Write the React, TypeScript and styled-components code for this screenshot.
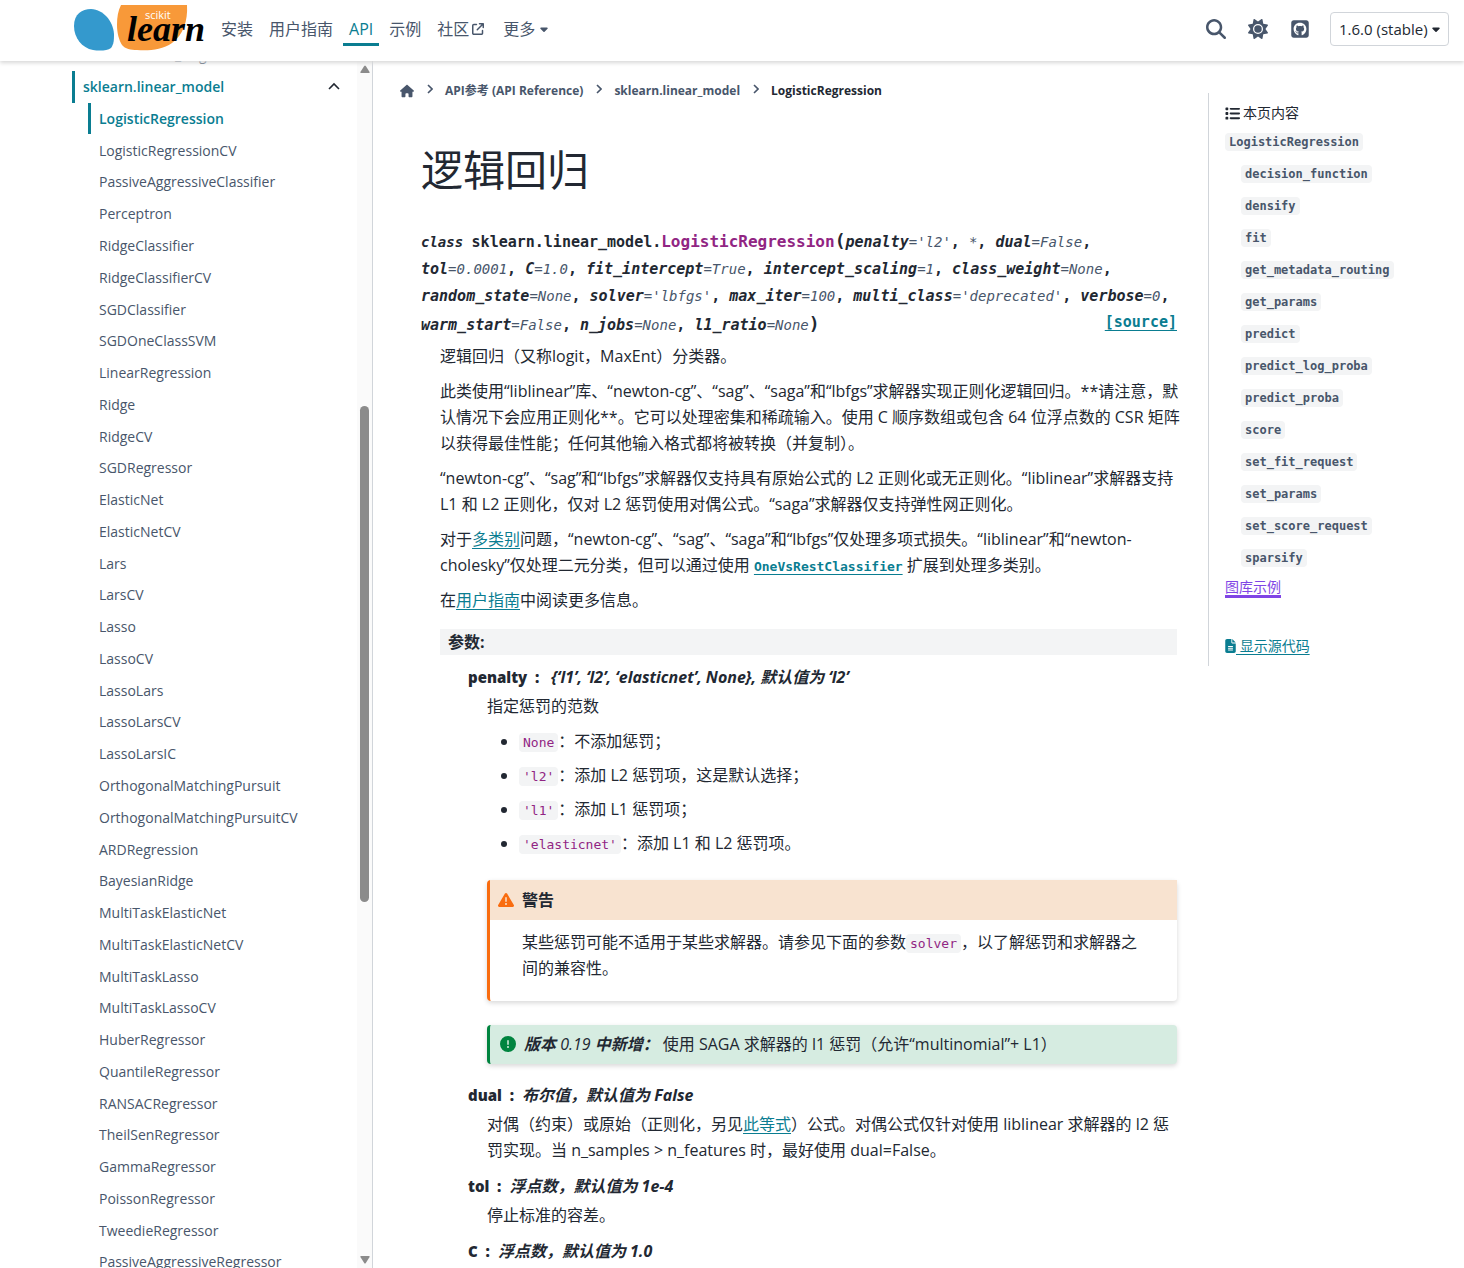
import React from "react";
import styled, { createGlobalStyle, css } from "styled-components";
import {
  FaArrowUpRightFromSquare,
  FaCaretDown,
  FaCircleExclamation,
  FaFileLines,
  FaHouse,
  FaList,
  FaMagnifyingGlass,
  FaSquareGithub,
  FaSun,
  FaTriangleExclamation,
} from "react-icons/fa6";

const color = {
  text: "#222832",
  muted: "#48566b",
  primary: "#0a7d91",
  visited: "#8045e5",
  code: "#912583",
  surface: "#f3f4f5",
  border: "#d1d5da",
  warning: "#f96c0f",
  warningBg: "#f8e3d0",
  success: "#00843f",
  successBg: "#d6ece1",
};

const sans = `"Open Sans", "Noto Sans CJK SC", sans-serif`;
const mono = `"DejaVu Sans Mono", "Noto Sans CJK SC", monospace`;

const GlobalStyle = createGlobalStyle`
  *, *::before, *::after { box-sizing: border-box; }
  body {
    margin: 0;
    background: #fff;
    color: ${color.text};
    font: 16px/26px ${sans};
  }
  ul, ol, dl, dd, p, h1 { margin: 0; padding: 0; }
  ul, ol { list-style: none; }
  button { font: inherit; color: inherit; background: none; border: 0; padding: 0; cursor: pointer; }
  a { color: ${color.primary}; text-underline-offset: 3px; }
`;

/* ---------- header ---------- */

const Header = styled.header`
  position: sticky;
  top: 0;
  z-index: 2;
  display: flex;
  align-items: center;
  height: 61px;
  padding: 0 15px 3px 72px;
  background: #fff;
  box-shadow: 0 2px 4px 0 #d8d8d8;
`;

const LogoLink = styled.a`
  display: flex;
  margin-right: 10px;
`;

const MainNav = styled.ul`
  display: flex;
  gap: 4px;
  flex: 1;
`;

const navEntry = css<{ $active?: boolean }>`
  display: flex;
  align-items: center;
  gap: 3px;
  height: 34px;
  padding: 3px 6px 0;
  color: ${(p) => (p.$active ? color.primary : color.muted)};
  border-bottom: 3px solid ${(p) => (p.$active ? color.primary : "transparent")};
  text-decoration: none;
`;

const NavLink = styled.a<{ $active?: boolean }>`
  ${navEntry}
`;

const NavButton = styled.button<{ $active?: boolean }>`
  && {
    ${navEntry}
    margin-left: 3px;
  }
`;

const Tools = styled.div`
  display: flex;
  align-items: center;
  gap: 20px;
`;

const IconGroup = styled.div`
  display: flex;
  align-items: center;
  gap: 22px;
  color: ${color.muted};
  font-size: 20px;
`;

const IconButton = styled.button`
  display: flex;
`;

const GithubLink = styled.a`
  display: flex;
  color: ${color.muted};
`;

const VersionPicker = styled.label`
  position: relative;
  color: ${color.text};
  font-size: 12px;
  svg {
    position: absolute;
    right: 7px;
    top: 11px;
    pointer-events: none;
  }
`;

const VersionSelect = styled.select`
  appearance: none;
  display: block;
  width: 119px;
  height: 34px;
  padding: 0 8px;
  border: 1px solid ${color.border};
  border-radius: 4px;
  background: #fff;
  color: ${color.text};
  font: 15px/24px ${sans};
`;

const Logo = () => (
  <svg width="133" height="50" viewBox="72 4 133 50" role="img" aria-label="scikit-learn">
    <path
      d="M74 26C74 14 82 9 91 9c13 1 22 12 23 25 0 5 0 10-3 14-4 3-12 3-18 2C82 48 74 38 74 26Z"
      fill="#3499cd"
    />
    <path
      d="M121 5h66c1 16-4 30-15 38-10 7-24 8-35 7-6 0-12-1-15-5-3-5-5-12-5-20 0-8 1-14 4-20Z"
      fill="#f89939"
    />
    <text x="145" y="19" fontSize="11" fill="#fff" fontFamily={`"Open Sans", sans-serif`}>
      scikit
    </text>
    <text
      x="127"
      y="41"
      fontSize="36"
      fontWeight="700"
      fontStyle="italic"
      fill="#010101"
      fontFamily={`"Liberation Serif", serif`}
    >
      learn
    </text>
  </svg>
);

/* ---------- page frame ---------- */

const Page = styled.div`
  display: grid;
  grid-template-columns: 373px minmax(0, 1fr) 256px;
  align-items: start;
`;

const Sidebar = styled.aside`
  position: sticky;
  top: 61px;
  display: flex;
  height: calc(100vh - 61px);
  padding-left: 72px;
  border-right: 1px solid ${color.border};
  overflow: hidden;
`;

const SideNav = styled.nav`
  flex: 1;
`;

const SideList = styled.ul`
  display: flex;
  flex-direction: column;
  min-height: calc(100% + 32px);
  margin-top: -22px;
`;

const SideItem = styled.li<{ $nested?: boolean }>`
  display: flex;
  flex: 1 0 auto;
  align-items: stretch;
  padding-left: ${(p) => (p.$nested ? 16 : 0)}px;
`;

const SideLink = styled.a<{ $active?: boolean }>`
  display: flex;
  align-items: center;
  flex: 1;
  padding: 4px 8px 3px 8px;
  border-left: 3px solid ${(p) => (p.$active ? color.primary : "transparent")};
  color: ${(p) => (p.$active ? color.primary : color.muted)};
  font-size: 14px;
  font-weight: ${(p) => (p.$active ? 600 : 400)};
  line-height: 24px;
  text-decoration: none;
`;

const Toggle = styled.button`
  display: flex;
  align-items: center;
  margin-right: 17px;
`;

const ScrollBar = styled.div`
  display: flex;
  flex-direction: column;
  align-items: center;
  width: 15px;
  padding: 4px 0;
  background: #fafafa;
`;

const ScrollTrack = styled.div`
  flex: 1;
  display: grid;
  grid-template-rows: 332fr 495fr 353fr;
`;

const ScrollThumb = styled.div`
  grid-row: 2;
  width: 9px;
  border-radius: 5px;
  background: #8b8b8b;
`;

/* ---------- article ---------- */

const Main = styled.main`
  padding: 17px 31px 0 27px;
`;

const Crumbs = styled.ol`
  display: flex;
  align-items: center;
  font-size: 12px;
  font-weight: 700;
`;

const Crumb = styled.li`
  display: flex;
  align-items: center;
  color: ${color.text};
  & + & > svg { margin: 0 12px 0 13px; color: ${color.muted}; }
  a { display: flex; color: ${color.muted}; text-decoration: none; font-size: 12px; }
`;

const HomeLink = styled.a`
  && { font-size: 14px; }
`;

const Article = styled.article`
  padding: 37px 0 0 21px;
`;

const Title = styled.h1`
  font-size: 42px;
  font-weight: 400;
  line-height: 58px;
`;

const Signature = styled.div`
  margin-top: 28px;
  font: 700 15px/27px ${mono};
`;

const Keyword = styled.em`
  font-size: 14px;
`;

const ClassName = styled.span`
  color: ${color.code};
  font-size: 16px;
`;

const Paren = styled.span`
  font-size: 18px;
`;

const ArgValue = styled.span`
  color: ${color.muted};
  font-size: 14px;
  font-weight: 400;
  font-style: italic;
`;

const SourceLink = styled.a`
  float: right;
  line-height: 24px;
`;

const Body = styled.div`
  display: flex;
  flex-direction: column;
  gap: 9px;
  padding: 4px 0 0 19px;
`;

const Prose = styled.p`
  margin-right: -5px;
`;

const Code = styled.code`
  padding: 2px 4px;
  border-radius: 4px;
  background: ${color.surface};
  color: ${color.code};
  font: 13px/18px ${mono};
`;

const CodeLink = styled.a`
  font: 700 13px/18px ${mono};
`;

const FieldTitle = styled.div`
  margin-top: 7px;
  padding: 0 8px;
  background: ${color.surface};
  font-weight: 700;
`;

const Params = styled.dl`
  padding-left: 28px;
`;

const Term = styled.dt`
  margin-bottom: 3px;
  font-weight: 800;
  font-size: 15px;
`;

const TermType = styled.em<{ $wide?: boolean }>`
  margin-left: ${(p) => (p.$wide ? 12 : 8)}px;
  font-size: 16px;
  font-weight: 700;
`;

const Desc = styled.dd`
  margin: 0 0 10px 19px;
`;

const Options = styled.ul`
  display: flex;
  flex-direction: column;
  gap: 8px;
  margin: 9px 0 24px 32px;
  list-style: disc;
`;

const Admonition = styled.section`
  margin-bottom: 24px;
  border-left: 3px solid ${color.warning};
  border-radius: 4px;
  box-shadow: 0 2px 5px #d8d8d8;
`;

const AdmonitionTitle = styled.p`
  display: flex;
  align-items: center;
  gap: 8px;
  padding: 7px 8px;
  background: ${color.warningBg};
  font-weight: 700;
  svg { color: ${color.warning}; }
`;

const AdmonitionText = styled.p`
  padding: 9px 32px 20px;
`;

const VersionNote = styled.p`
  display: flex;
  align-items: center;
  margin-bottom: 18px;
  padding: 6px 10px 7px;
  border-left: 3px solid ${color.success};
  border-radius: 4px;
  background: ${color.successBg};
  box-shadow: 0 2px 5px #d8d8d8;
  svg { margin-right: 8px; color: ${color.success}; }
  em { margin-right: 4px; font-weight: 700; }
`;

const VersionNumber = styled.span`
  font-weight: 500;
`;

/* ---------- table of contents ---------- */

const Toc = styled.aside`
  margin-top: 32px;
  padding: 7px 0 7px 16px;
  border-left: 1px solid ${color.border};
  font-size: 14px;
`;

const TocTitle = styled.div`
  display: flex;
  align-items: center;
  gap: 3px;
`;

const TocItem = styled.li<{ $nested?: boolean }>`
  padding: 2px 0 4px ${(p) => (p.$nested ? 16 : 0)}px;
  line-height: 26px;
`;

const TocLink = styled.a`
  display: inline-block;
  padding: 0 4px;
  border-radius: 4px;
  background: ${color.surface};
  color: ${color.muted};
  font: 700 12px/18px ${mono};
  text-decoration: none;
`;

const VisitedLink = styled.a`
  color: ${color.visited};
  text-decoration-thickness: 3px;
`;

const ShowSource = styled.a`
  display: flex;
  align-items: center;
  margin-top: 33px;
  white-space: pre;
  svg { width: 11px; }
`;

const models = [
  "LogisticRegression", "LogisticRegressionCV", "PassiveAggressiveClassifier", "Perceptron",
  "RidgeClassifier", "RidgeClassifierCV", "SGDClassifier", "SGDOneClassSVM", "LinearRegression",
  "Ridge", "RidgeCV", "SGDRegressor", "ElasticNet", "ElasticNetCV", "Lars", "LarsCV", "Lasso",
  "LassoCV", "LassoLars", "LassoLarsCV", "LassoLarsIC", "OrthogonalMatchingPursuit",
  "OrthogonalMatchingPursuitCV", "ARDRegression", "BayesianRidge", "MultiTaskElasticNet",
  "MultiTaskElasticNetCV", "MultiTaskLasso", "MultiTaskLassoCV", "HuberRegressor",
  "QuantileRegressor", "RANSACRegressor", "TheilSenRegressor", "GammaRegressor",
  "PoissonRegressor", "TweedieRegressor", "PassiveAggressiveRegressor",
];

const methods = [
  "decision_function", "densify", "fit", "get_metadata_routing", "get_params", "predict",
  "predict_log_proba", "predict_proba", "score", "set_fit_request", "set_params",
  "set_score_request", "sparsify",
];

const args: [string, string?][] = [
  ["penalty", "'l2'"], ["*"], ["dual", "False"], ["tol", "0.0001"], ["C", "1.0"],
  ["fit_intercept", "True"], ["intercept_scaling", "1"], ["class_weight", "None"],
  ["random_state", "None"], ["solver", "'lbfgs'"], ["max_iter", "100"],
  ["multi_class", "'deprecated'"], ["verbose", "0"], ["warm_start", "False"],
  ["n_jobs", "None"], ["l1_ratio", "None"],
];

const ChevronUp = () => (
  <svg width="12" height="12" viewBox="0 0 12 12" fill="none" stroke={color.text} strokeWidth="1.6">
    <path d="M1 8l5-5 5 5" />
  </svg>
);

const Separator = () => (
  <svg width="6" height="14" viewBox="0 0 6 14" fill="none" stroke="currentColor" strokeWidth="1.6" aria-hidden="true">
    <path d="M1 1l4 4-4 4" />
  </svg>
);

const ScrollArrow = ({ down }: { down?: boolean }) => (
  <svg width="10" height="8" viewBox="0 0 10 8" fill="#8b8b8b" aria-hidden="true">
    <path d={down ? "M1 0h8q1 0 .6 1L5.8 7q-.8 1-1.6 0L.4 1Q0 0 1 0Z" : "M1 8h8q1 0 .6-1L5.8 1Q5 0 4.2 1L.4 7Q0 8 1 8Z"} />
  </svg>
);

export default function App() {
  return (
    <>
      <GlobalStyle />
      <Header>
        <LogoLink href="#"><Logo /></LogoLink>
        <MainNav>
          <li><NavLink href="#">安装</NavLink></li>
          <li><NavLink href="#">用户指南</NavLink></li>
          <li><NavLink href="#" $active>API</NavLink></li>
          <li><NavLink href="#">示例</NavLink></li>
          <li><NavLink href="#">社区<FaArrowUpRightFromSquare size={12} /></NavLink></li>
          <li><NavButton type="button">更多<FaCaretDown size={12} /></NavButton></li>
        </MainNav>
        <Tools>
          <IconGroup>
            <IconButton type="button" aria-label="搜索"><FaMagnifyingGlass /></IconButton>
            <IconButton type="button" aria-label="主题"><FaSun /></IconButton>
            <GithubLink href="#" aria-label="GitHub"><FaSquareGithub /></GithubLink>
          </IconGroup>
          <VersionPicker>
            <VersionSelect aria-label="版本"><option>1.6.0 (stable)</option></VersionSelect>
            <FaCaretDown />
          </VersionPicker>
        </Tools>
      </Header>
      <Page>
        <Sidebar>
          <SideNav>
            <SideList>
              <SideItem><SideLink href="#">sklearn.kernel_ridge</SideLink></SideItem>
              <SideItem>
                <SideLink href="#" $active>sklearn.linear_model</SideLink>
                <Toggle type="button" aria-label="折叠"><ChevronUp /></Toggle>
              </SideItem>
              {models.map((name, i) => (
                <SideItem key={name} $nested>
                  <SideLink href="#" $active={i === 0}>{name}</SideLink>
                </SideItem>
              ))}
            </SideList>
          </SideNav>
          <ScrollBar>
            <ScrollArrow />
            <ScrollTrack><ScrollThumb /></ScrollTrack>
            <ScrollArrow down />
          </ScrollBar>
        </Sidebar>

        <Main>
          <nav aria-label="Breadcrumb">
            <Crumbs>
              <Crumb><HomeLink href="#" aria-label="Home"><FaHouse /></HomeLink></Crumb>
              <Crumb><Separator /><a href="#">API参考 (API Reference)</a></Crumb>
              <Crumb><Separator /><a href="#">sklearn.linear_model</a></Crumb>
              <Crumb aria-current="page"><Separator />LogisticRegression</Crumb>
            </Crumbs>
          </nav>
          <Article>
            <Title>逻辑回归</Title>
            <Signature>
              <Keyword>class </Keyword>sklearn.linear_model.<ClassName>LogisticRegression</ClassName>
              <Paren>(</Paren>
              {args.map(([name, value], i) => (
                <React.Fragment key={name}>
                  {value ? <em>{name}</em> : <ArgValue>{name}</ArgValue>}
                  {value && <ArgValue>={value}</ArgValue>}
                  {i < args.length - 1 && ", "}
                </React.Fragment>
              ))}
              <Paren>)</Paren>
              <SourceLink href="#">[source]</SourceLink>
            </Signature>
            <Body>
              <Prose>逻辑回归（又称logit，MaxEnt）分类器。</Prose>
              <Prose>
                此类使用“liblinear”库、“newton-cg”、“sag”、“saga”和“lbfgs”求解器实现正则化逻辑回归。**请注意，默认情况下会应用正则化**。它可以处理密集和稀疏输入。使用 C 顺序数组或包含 64 位浮点数的 CSR 矩阵以获得最佳性能；任何其他输入格式都将被转换（并复制）。
              </Prose>
              <Prose>
                “newton-cg”、“sag”和“lbfgs”求解器仅支持具有原始公式的 L2 正则化或无正则化。“liblinear”求解器支持 L1 和 L2 正则化，仅对 L2 惩罚使用对偶公式。“saga”求解器仅支持弹性网正则化。
              </Prose>
              <Prose>
                对于<a href="#">多类别</a>问题，“newton-cg”、“sag”、“saga”和“lbfgs”仅处理多项式损失。“liblinear”和“newton-cholesky”仅处理二元分类，但可以通过使用 <CodeLink href="#">OneVsRestClassifier</CodeLink> 扩展到处理多类别。
              </Prose>
              <Prose>在<a href="#">用户指南</a>中阅读更多信息。</Prose>
              <FieldTitle>参数:</FieldTitle>
              <Params>
                <Term>penalty&nbsp; :<TermType $wide>{"{‘l1’, ‘l2’, ‘elasticnet’, None}, 默认值为 ‘l2’"}</TermType></Term>
                <Desc>
                  <p>指定惩罚的范数</p>
                  <Options>
                    <li><Code>None</Code>：不添加惩罚；</li>
                    <li><Code>'l2'</Code>：添加 L2 惩罚项，这是默认选择；</li>
                    <li><Code>'l1'</Code>：添加 L1 惩罚项；</li>
                    <li><Code>'elasticnet'</Code>：添加 L1 和 L2 惩罚项。</li>
                  </Options>
                  <Admonition>
                    <AdmonitionTitle><FaTriangleExclamation size={16} />警告</AdmonitionTitle>
                    <AdmonitionText>
                      某些惩罚可能不适用于某些求解器。请参见下面的参数<Code>solver</Code>，以了解惩罚和求解器之间的兼容性。
                    </AdmonitionText>
                  </Admonition>
                  <VersionNote>
                    <FaCircleExclamation size={16} />
                    <em>版本 <VersionNumber>0.19</VersionNumber> 中新增：</em>
                    使用 SAGA 求解器的 l1 惩罚（允许“multinomial”+ L1）
                  </VersionNote>
                </Desc>
                <Term>dual&nbsp; :<TermType>布尔值，默认值为 False</TermType></Term>
                <Desc>
                  对偶（约束）或原始（正则化，另见<a href="#">此等式</a>）公式。对偶公式仅针对使用 liblinear 求解器的 l2 惩罚实现。当 n_samples &gt; n_features 时，最好使用 dual=False。
                </Desc>
                <Term>tol&nbsp; :<TermType>浮点数，默认值为 1e-4</TermType></Term>
                <Desc>停止标准的容差。</Desc>
                <Term>C&nbsp; :<TermType>浮点数，默认值为 1.0</TermType></Term>
              </Params>
            </Body>
          </Article>
        </Main>

        <Toc>
          <TocTitle><FaList size={15} />本页内容</TocTitle>
          <ul>
            <TocItem><TocLink href="#">LogisticRegression</TocLink></TocItem>
            {methods.map((name) => (
              <TocItem key={name} $nested><TocLink href="#">{name}</TocLink></TocItem>
            ))}
          </ul>
          <VisitedLink href="#">图库示例</VisitedLink>
          <ShowSource href="#"><FaFileLines size={14} /> 显示源代码</ShowSource>
        </Toc>
      </Page>
    </>
  );
}
